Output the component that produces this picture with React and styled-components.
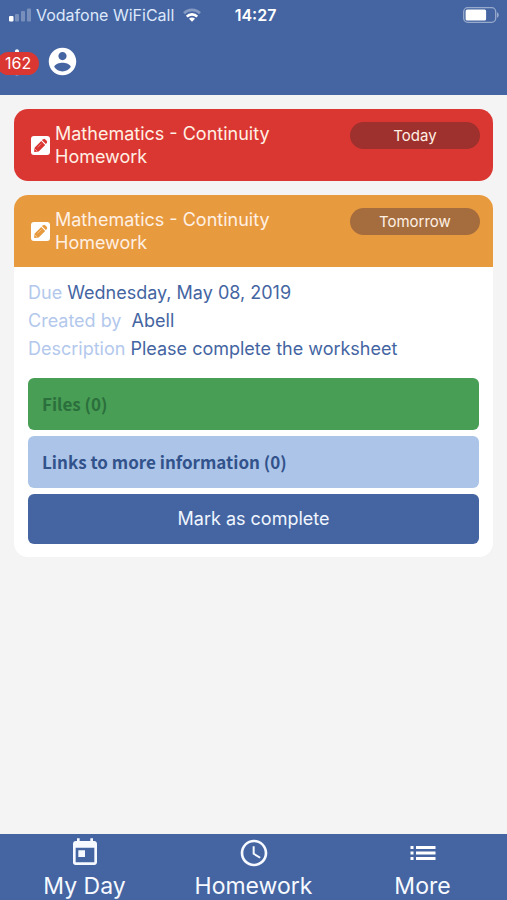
import React from 'react';
import styled, { createGlobalStyle } from 'styled-components';
import { MdAccessTime, MdNotifications, MdToday } from 'react-icons/md';

const GlobalStyle = createGlobalStyle`
  * {
    box-sizing: border-box;
  }

  body {
    margin: 0;
    background: #f4f4f4;
    font-family: Inter, "Liberation Sans", sans-serif;
  }

  button {
    border: 0;
    padding: 0;
    font: inherit;
    color: inherit;
    background: none;
    cursor: pointer;
  }
`;

const homeworks = [
  { id: 1, title: 'Mathematics - Continuity Homework', when: 'Today', color: '#db3732', pill: '#9e302d' },
  {
    id: 2,
    title: 'Mathematics - Continuity Homework',
    when: 'Tomorrow',
    color: '#e89a3f',
    pill: '#a56d3e',
    details: {
      due: 'Wednesday, May 08, 2019',
      author: 'Abell',
      description: 'Please complete the worksheet',
    },
  },
];

const SignalIcon = () => (
  <svg width="24" height="14" viewBox="0 0 24 14" fill="#fff" aria-hidden="true">
    <rect x="1" y="8" width="4.5" height="5.5" rx="1" />
    <rect x="7" y="6" width="4" height="7.5" rx="1" opacity="0.28" />
    <rect x="13" y="3" width="4" height="10.5" rx="1" opacity="0.28" />
    <rect x="19" y="0.5" width="4" height="13" rx="1" opacity="0.28" />
  </svg>
);

const WifiIcon = () => (
  <svg width="18" height="14" viewBox="0 0 18 14" fill="none" stroke="#fff" strokeWidth="2.6" aria-hidden="true">
    <path d="M1 5.2C5.5.8 12.5.8 17 5.2" opacity="0.35" />
    <path d="M3.8 8.6C6.6 5.6 11.4 5.6 14.2 8.6" />
    <path d="M9 13.7 6 10.8C7.6 9.2 10.4 9.2 12 10.8Z" fill="#fff" stroke="none" />
  </svg>
);

const BatteryIcon = () => (
  <svg width="36" height="16" viewBox="0 0 36 16" fill="none" aria-hidden="true">
    <rect x="0.7" y="0.7" width="32" height="14.6" rx="4" stroke="#fff" strokeOpacity="0.45" strokeWidth="1.3" />
    <rect x="2.6" y="2.6" width="20.5" height="10.8" rx="1.5" fill="#fff" />
    <path d="M34 5.3C36.4 6.3 36.4 9.7 34 10.7Z" fill="#fff" fillOpacity="0.45" />
  </svg>
);

const AccountIcon = () => (
  <svg width="33" height="33" viewBox="0 0 24 24" fill="#fff" aria-hidden="true">
    <path d="M12 2C6.48 2 2 6.48 2 12s4.48 10 10 10 10-4.48 10-10S17.52 2 12 2zm0 3c1.66 0 3 1.34 3 3s-1.34 3-3 3-3-1.34-3-3 1.34-3 3-3zm0 14.2c-2.5 0-4.71-1.28-6-3.22.03-1.99 4-3.08 6-3.08 1.99 0 5.97 1.09 6 3.08-1.29 1.94-3.5 3.22-6 3.22z" />
  </svg>
);

// The pencil takes the colour of the card header
const PencilIcon = ({ color }) => (
  <svg width="19" height="19" viewBox="0 0 19 19" aria-hidden="true">
    <rect width="19" height="19" rx="3" fill="#fff" />
    <g fill={color}>
      <path d="M10.3 5 14.2 8.9 7.7 15.400 4 16Q2.900 16.100 3.100 15L3.700 11.500Z" />
      <path d="M11 4.300 12.200 3.200Q13.300 2.400 14.300 3.400L15.700 4.800Q16.600 5.800 15.900 6.900L14.800 8.100Z" />
    </g>
    <path d="M6.600 11.300 10.400 7.500" stroke="#fff" strokeWidth="0.6" opacity="0.6" />
    <path d="M4.200 13.300 5.800 14.900" stroke="#fff" strokeWidth="0.6" />
  </svg>
);

const ListIcon = () => (
  <svg width="32" height="32" viewBox="0 0 32 32" fill="#fff" aria-hidden="true">
    {[9, 14.5, 20].map((y) => (
      <React.Fragment key={y}>
        <rect x="3.5" y={y} width="3" height="3" />
        <rect x="9" y={y} width="19.5" height="3" />
      </React.Fragment>
    ))}
  </svg>
);

const HomeworkCard = ({ homework }) => {
  const { title, when, color, pill, details } = homework;

  return (
    <Card>
      <CardHeader $color={color}>
        <PencilIcon color={color} />
        <CardTitle>{title}</CardTitle>
        <Pill $color={pill}>{when}</Pill>
      </CardHeader>
      {details && (
        <CardBody>
          <Detail><span>Due</span> {details.due}</Detail>
          <Detail><span>Created by</span> &nbsp;{details.author}</Detail>
          <Detail><span>Description</span> {details.description}</Detail>
          <Actions>
            <Section $color="#2b6f3d" $background="#489e54">Files (0)</Section>
            <Section $color="#32528b" $background="#abc4e8">Links to more information (0)</Section>
            <CompleteButton>Mark as complete</CompleteButton>
          </Actions>
        </CardBody>
      )}
    </Card>
  );
};

const App = () => {
  return (
    <Page>
      <GlobalStyle />
      <Header>
        <StatusBar>
          <Carrier>
            <SignalIcon />
            Vodafone WiFiCall
            <WifiIcon />
          </Carrier>
          <Clock>14:27</Clock>
          <Battery><BatteryIcon /></Battery>
        </StatusBar>
        <Toolbar>
          <IconButton aria-label="Notifications">
            <MdNotifications size={32} />
            <Badge>162</Badge>
          </IconButton>
          <IconButton aria-label="Account">
            <AccountIcon />
          </IconButton>
        </Toolbar>
      </Header>

      <List>
        {homeworks.map((homework) => (
          <HomeworkCard key={homework.id} homework={homework} />
        ))}
      </List>

      <TabBar>
        <Tab href="#my-day"><MdToday size={32} />My Day</Tab>
        <Tab href="#homework"><MdAccessTime size={32} />Homework</Tab>
        <Tab href="#more"><ListIcon />More</Tab>
      </TabBar>
    </Page>
  );
};

const Page = styled.div`
  display: flex;
  flex-direction: column;
  min-height: 100vh;
`;

const Header = styled.header`
  color: #fff;
  background: #4465a2;
`;

const StatusBar = styled.div`
  display: grid;
  grid-template-columns: 1fr auto 1fr;
  align-items: center;
  height: 30px;
  padding: 0 8px;
  font-size: 16px;
`;

const Carrier = styled.div`
  display: flex;
  align-items: center;
  gap: 4px;
  white-space: nowrap;
  color: #dde8fa;

  svg:last-child {
    margin-left: 5px;
  }
`;

const Clock = styled.time`
  padding-left: 4px;
  font-weight: 600;
`;

const Battery = styled.div`
  display: flex;
  justify-content: flex-end;
`;

const Toolbar = styled.div`
  display: flex;
  align-items: center;
  gap: 13px;
  height: 65px;
  padding: 0 0 2px 1px;
`;

const IconButton = styled.button`
  position: relative;
  display: flex;
`;

const Badge = styled.span`
  position: absolute;
  top: 6px;
  left: -4px;
  padding: 0 8px;
  border-radius: 12px;
  font-size: 16px;
  line-height: 23px;
  background: #db3732;
`;

const List = styled.main`
  display: flex;
  flex: 1;
  flex-direction: column;
  gap: 14px;
  padding: 14px;
`;

const Card = styled.article`
  overflow: hidden;
  border-radius: 14px;
  background: #fff;
`;

const CardHeader = styled.header`
  display: flex;
  align-items: center;
  gap: 5px;
  padding: 13px 13px 13px 17px;
  color: #fff;
  background: ${({ $color }) => $color};

  svg {
    flex: none;
  }
`;

const CardTitle = styled.h2`
  flex: 1;
  margin: 0;
  padding-right: 48px;
  font-size: 18px;
  font-weight: 400;
  line-height: 23px;
  color: #fff0e4;
`;

const Pill = styled.span`
  align-self: flex-start;
  width: 29%;
  border-radius: 14px;
  font-size: 15px;
  line-height: 27px;
  text-align: center;
  color: #fff0e4;
  background: ${({ $color }) => $color};
`;

const CardBody = styled.div`
  padding: 12px 14px 13px;
`;

const Detail = styled.p`
  margin: 0;
  font-size: 18px;
  line-height: 28px;
  color: #4465a2;

  span {
    color: #b3c8ec;
  }
`;

const Actions = styled.div`
  display: flex;
  flex-direction: column;
  gap: 6px;
  margin-top: 15px;
`;

const Section = styled.button`
  padding: 0 14px;
  border-radius: 6px;
  font-family: "Noto Sans CJK SC", "Noto Sans", sans-serif;
  font-size: 17px;
  font-weight: 700;
  line-height: 52px;
  text-align: left;
  color: ${({ $color }) => $color};
  background: ${({ $background }) => $background};
`;

const CompleteButton = styled.button`
  border-radius: 6px;
  font-size: 18px;
  line-height: 50px;
  color: #f0f5ff;
  background: #4465a2;
`;

const TabBar = styled.nav`
  display: grid;
  grid-template-columns: repeat(3, 1fr);
  background: #4465a2;
`;

const Tab = styled.a`
  display: flex;
  flex-direction: column;
  align-items: center;
  gap: 3px;
  padding-top: 3px;
  font-size: 23px;
  line-height: 28px;
  color: #f6f9ff;
  text-decoration: none;
`;

export default App;
